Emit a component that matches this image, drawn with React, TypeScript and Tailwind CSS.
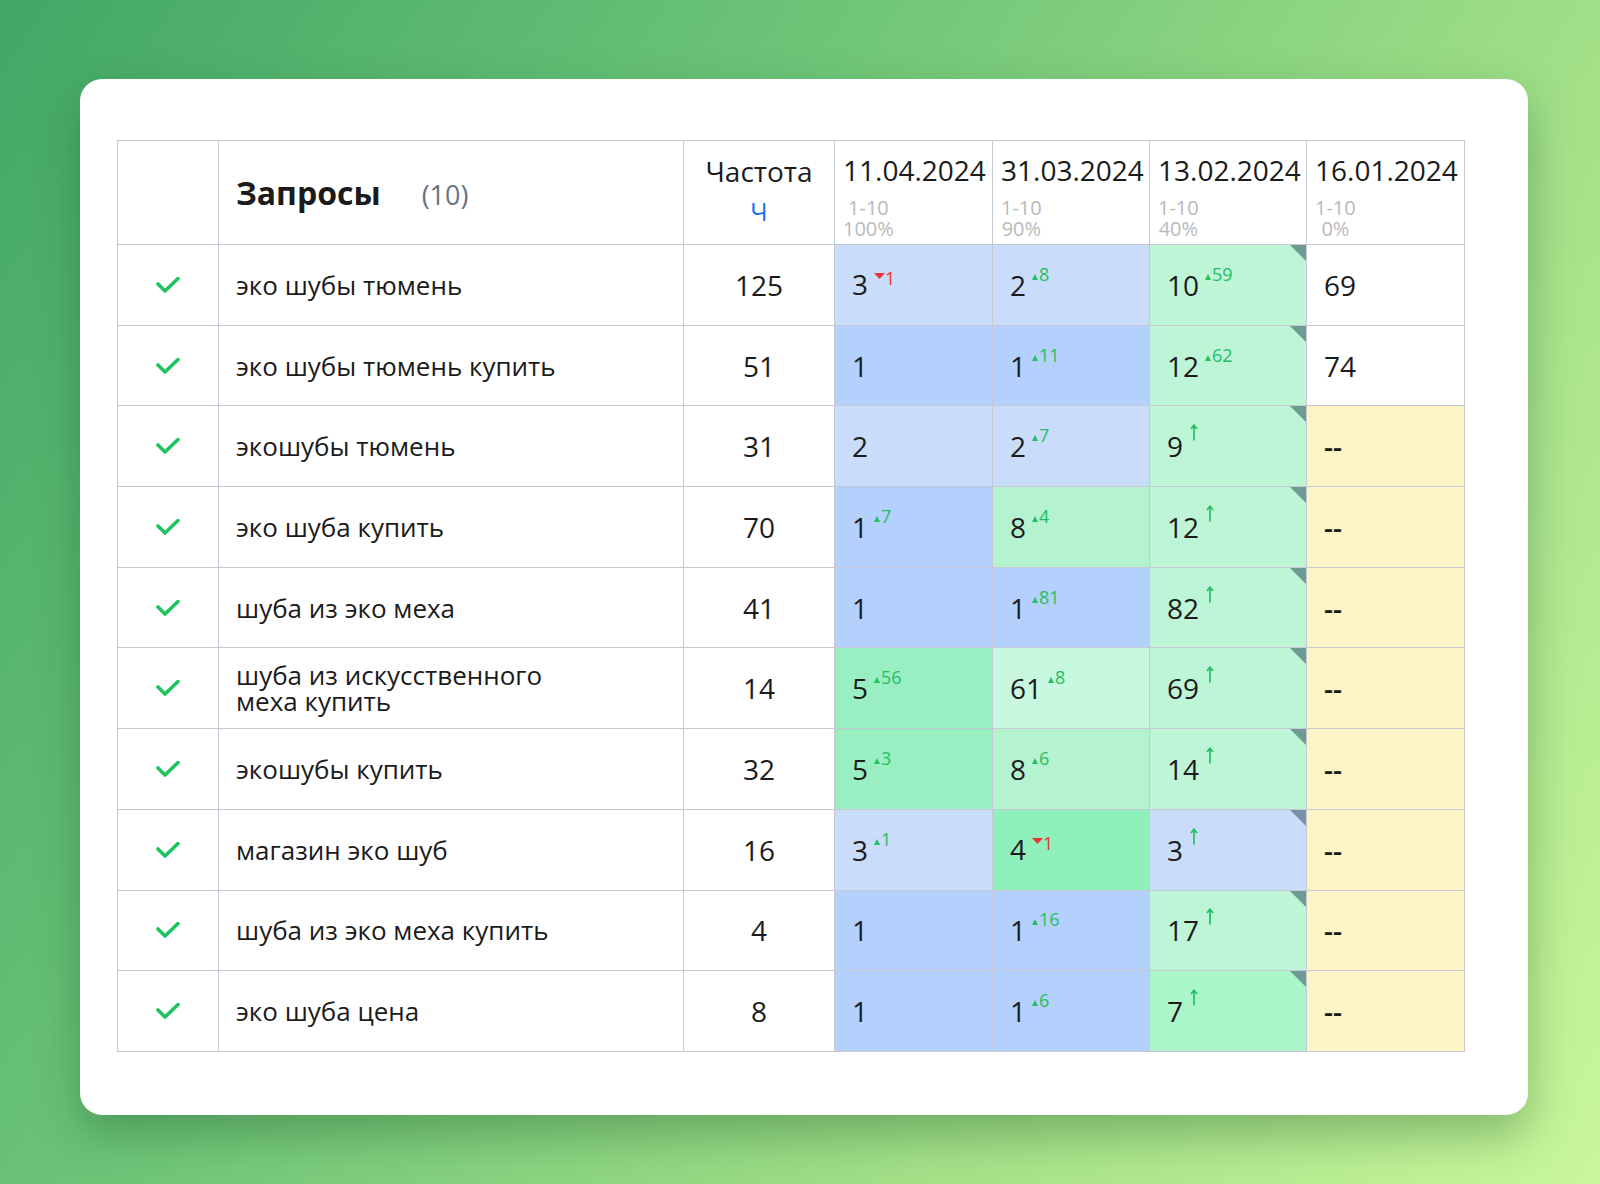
import React from 'react';

type Delta = { dir: 'up' | 'down'; n: number } | { dir: 'arrow' };

type Cell = {
  v: string;
  bg: string;
  d?: Delta;
  corner?: string;
};

type Row = {
  q: React.ReactNode;
  f: number;
  cells: Cell[];
};

const LB = 'bg-[#c9ddfb]';
const B = 'bg-[#b3d1fc]';
const MINT = 'bg-[#bef5d7]';
const PALE = 'bg-[#c9f8e0]';
const G1 = 'bg-[#b5f3d0]';
const G2 = 'bg-[#9aefc2]';
const G3 = 'bg-[#8ef0ba]';
const MINT2 = 'bg-[#aaf5ca]';
const YEL = 'bg-[#fdf4c6]';
const WHITE = 'bg-white';

const CG = 'border-t-[#6e9a94]';
const CB = 'border-t-[#7c8fa8]';

const up = (n: number): Delta => ({ dir: 'up', n });
const down = (n: number): Delta => ({ dir: 'down', n });
const arrow: Delta = { dir: 'arrow' };

const rows: Row[] = [
  {
    q: 'эко шубы тюмень',
    f: 125,
    cells: [
      { v: '3', bg: LB, d: down(1) },
      { v: '2', bg: LB, d: up(8) },
      { v: '10', bg: MINT, d: up(59), corner: CG },
      { v: '69', bg: WHITE },
    ],
  },
  {
    q: 'эко шубы тюмень купить',
    f: 51,
    cells: [
      { v: '1', bg: B },
      { v: '1', bg: B, d: up(11) },
      { v: '12', bg: MINT, d: up(62), corner: CG },
      { v: '74', bg: WHITE },
    ],
  },
  {
    q: 'экошубы тюмень',
    f: 31,
    cells: [
      { v: '2', bg: LB },
      { v: '2', bg: LB, d: up(7) },
      { v: '9', bg: MINT, d: arrow, corner: CG },
      { v: '--', bg: YEL },
    ],
  },
  {
    q: 'эко шуба купить',
    f: 70,
    cells: [
      { v: '1', bg: B, d: up(7) },
      { v: '8', bg: G1, d: up(4) },
      { v: '12', bg: MINT, d: arrow, corner: CG },
      { v: '--', bg: YEL },
    ],
  },
  {
    q: 'шуба из эко меха',
    f: 41,
    cells: [
      { v: '1', bg: B },
      { v: '1', bg: B, d: up(81) },
      { v: '82', bg: MINT, d: arrow, corner: CG },
      { v: '--', bg: YEL },
    ],
  },
  {
    q: (
      <>
        шуба из искусственного
        <br />
        меха купить
      </>
    ),
    f: 14,
    cells: [
      { v: '5', bg: G2, d: up(56) },
      { v: '61', bg: PALE, d: up(8) },
      { v: '69', bg: MINT, d: arrow, corner: CG },
      { v: '--', bg: YEL },
    ],
  },
  {
    q: 'экошубы купить',
    f: 32,
    cells: [
      { v: '5', bg: G2, d: up(3) },
      { v: '8', bg: G1, d: up(6) },
      { v: '14', bg: MINT, d: arrow, corner: CG },
      { v: '--', bg: YEL },
    ],
  },
  {
    q: 'магазин эко шуб',
    f: 16,
    cells: [
      { v: '3', bg: LB, d: up(1) },
      { v: '4', bg: G3, d: down(1) },
      { v: '3', bg: LB, d: arrow, corner: CB },
      { v: '--', bg: YEL },
    ],
  },
  {
    q: 'шуба из эко меха купить',
    f: 4,
    cells: [
      { v: '1', bg: B },
      { v: '1', bg: B, d: up(16) },
      { v: '17', bg: MINT, d: arrow, corner: CG },
      { v: '--', bg: YEL },
    ],
  },
  {
    q: 'эко шуба цена',
    f: 8,
    cells: [
      { v: '1', bg: B },
      { v: '1', bg: B, d: up(6) },
      { v: '7', bg: MINT2, d: arrow, corner: CG },
      { v: '--', bg: YEL },
    ],
  },
];

const dates = [
  { date: '11.04.2024', pct: '100%' },
  { date: '31.03.2024', pct: '90%' },
  { date: '13.02.2024', pct: '40%' },
  { date: '16.01.2024', pct: '0%' },
];

function Check() {
  return (
    <svg width="24" height="16" viewBox="0 0 24 16" className="mx-auto block">
      <polyline
        points="2,7 9,14 22,1.5"
        fill="none"
        stroke="#1fc461"
        strokeWidth="3.6"
        strokeLinecap="round"
        strokeLinejoin="round"
      />
    </svg>
  );
}

function DeltaMark({ d }: { d: Delta }) {
  if (d.dir === 'arrow') {
    return (
      <svg
        width="8"
        height="17"
        viewBox="0 0 8 17"
        className="relative -top-[16px] ml-[7px] inline-block align-baseline"
      >
        <line x1="4" y1="16.5" x2="4" y2="1.2" stroke="#22c05f" strokeWidth="1.7" />
        <polyline points="1,5 4,1.2 7,5" fill="none" stroke="#22c05f" strokeWidth="1.7" />
      </svg>
    );
  }
  if (d.dir === 'up') {
    return (
      <span className="relative -top-[16px] ml-[6px] inline-flex items-end text-[18px] leading-none text-[#22c05f]">
        <svg width="6" height="6" viewBox="0 0 6 6" className="mb-[3px] mr-[1px]">
          <polygon points="3,0 6,6 0,6" fill="#22c05f" />
        </svg>
        {d.n}
      </span>
    );
  }
  return (
    <span className="relative -top-[16px] ml-[6px] inline-flex items-start text-[18px] leading-none text-[#ee3434]">
      <svg width="11" height="6" viewBox="0 0 11 6" className="mt-[4px]">
        <polygon points="0,0 11,0 5.5,6" fill="#ee3434" />
      </svg>
      {d.n}
    </span>
  );
}

export default function App() {
  return (
    <div
      className="min-h-[1184px] w-[1600px] bg-[linear-gradient(122deg,#42a766_0%,#6cc477_35%,#a3e088_70%,#c9f79b_100%)] pl-[80px] pt-[79px]"
      style={{ fontFamily: '"Open Sans", "Noto Sans", sans-serif' }}
    >
      <div className="w-[1448px] rounded-[22px] bg-white pb-[63px] pl-[37px] pt-[61px] shadow-[0_20px_45px_rgba(20,80,35,0.35)]">
        <table className="border-collapse text-[#1b1b1b]">
          <colgroup>
            <col className="w-[101px]" />
            <col className="w-[465px]" />
            <col className="w-[151px]" />
            <col className="w-[158px]" />
            <col className="w-[157px]" />
            <col className="w-[157px]" />
            <col className="w-[158px]" />
          </colgroup>
          <thead>
            <tr className="h-[104px]">
              <th className="border border-[#c6c8d4]" />
              <th className="border border-[#c6c8d4] pl-[17px] text-left align-middle">
                <span className="text-[32px] font-bold">Запросы</span>
                <span className="ml-[41px] text-[27px] font-normal text-[#6b7280]">(10)</span>
              </th>
              <th className="border border-[#c6c8d4] pt-[12px] text-center align-top font-normal">
                <div className="text-[28px] leading-[36px]">Частота</div>
                <div className="mt-[7px] text-[25px] leading-[30px] text-[#1d6ff2]">Ч</div>
              </th>
              {dates.map((h) => (
                <th
                  key={h.date}
                  className="border border-[#c6c8d4] pl-[8px] pt-[11px] text-left align-top font-normal"
                >
                  <div className="text-[28px] leading-[36px]">{h.date}</div>
                  <div className="mt-[9px] inline-flex flex-col items-center text-[20px] leading-[21px] text-[#b9b9bd]">
                    <span>1-10</span>
                    <span>{h.pct}</span>
                  </div>
                </th>
              ))}
            </tr>
          </thead>
          <tbody>
            {rows.map((r, i) => (
              <tr key={i} className="h-[80.7px]">
                <td className="border border-[#c6c8d4] align-middle">
                  <Check />
                </td>
                <td className="border border-[#c6c8d4] pl-[17px] align-middle text-[26px] leading-[26px]">
                  {r.q}
                </td>
                <td className="border border-[#c6c8d4] text-center align-middle text-[28px]">
                  {r.f}
                </td>
                {r.cells.map((c, j) => (
                  <td
                    key={j}
                    className={`relative border border-[#c6c8d4] pl-[17px] align-middle ${c.bg}`}
                  >
                    <span className={`text-[28px] leading-[36px] ${c.v === '--' ? 'font-semibold' : ''}`}>
                      {c.v}
                    </span>
                    {c.d && <DeltaMark d={c.d} />}
                    {c.corner && (
                      <span
                        className={`absolute right-0 top-0 h-0 w-0 border-l-[16px] border-t-[16px] border-l-transparent ${c.corner}`}
                      />
                    )}
                  </td>
                ))}
              </tr>
            ))}
          </tbody>
        </table>
      </div>
    </div>
  );
}
